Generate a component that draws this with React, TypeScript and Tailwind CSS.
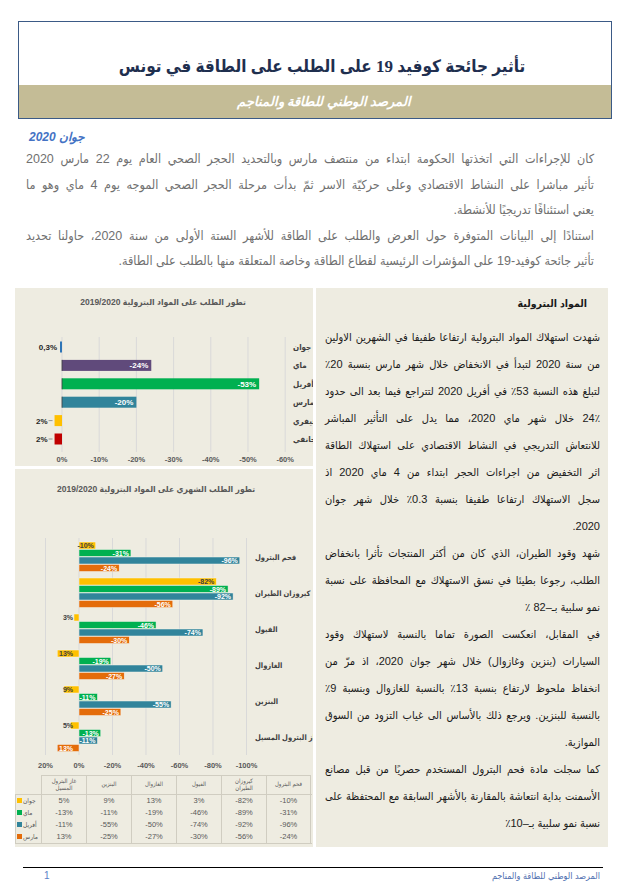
import type { ReactNode } from "react";

const intro: [string, boolean][] = [
  ["كان للإجراءات التي اتخذتها الحكومة ابتداء من منتصف مارس وبالتحديد الحجر الصحي العام يوم 22 مارس 2020", true],
  ["تأثير مباشرا على النشاط الاقتصادي وعلى حركيّة الاسر ثمّ بدأت مرحلة الحجر الصحي الموجه يوم 4 ماي وهو ما", true],
  ["يعني استئنافًا تدريجيًا للأنشطة.", false],
  ["استنادًا إلى البيانات المتوفرة حول العرض والطلب على الطاقة للأشهر الستة الأولى من سنة 2020، حاولنا تحديد", true],
  ["تأثير جائحة كوفيد-19 على المؤشرات الرئيسية لقطاع الطاقة وخاصة المتعلقة منها بالطلب على الطاقة.", false],
];

const body: [string, boolean][] = [
  ["شهدت استهلاك المواد البترولية ارتفاعا طفيفا في الشهرين الاولين", true],
  ["من سنة 2020 لتبدأ في الانخفاض خلال شهر مارس بنسبة 20٪", true],
  ["لتبلغ هذه النسبة 53٪ في أفريل 2020 لتتراجع فيما بعد الى حدود", true],
  ["24٪ خلال شهر ماي 2020، مما يدل على التأثير المباشر", true],
  ["للانتعاش التدريجي في النشاط الاقتصادي على استهلاك الطاقة", true],
  ["اثر التخفيض من اجراءات الحجر ابتداء من 4 ماي 2020 اذ", true],
  ["سجل الاستهلاك ارتفاعا طفيفا بنسبة 0.3٪ خلال شهر جوان", true],
  ["2020.", false],
  ["شهد وقود الطيران، الذي كان من أكثر المنتجات تأثرا بانخفاض", true],
  ["الطلب، رجوعا بطيئا في نسق الاستهلاك مع المحافظة على نسبة", true],
  ["نمو سلبية بـ–82 ٪", false],
  ["في المقابل، انعكست الصورة تماما بالنسبة لاستهلاك وقود", true],
  ["السيارات (بنزين وغازوال) خلال شهر جوان 2020، اذ مرّ من", true],
  ["انخفاظ ملحوظ لارتفاع بنسبة 13٪ بالنسبة للغازوال وبنسبة 9٪", true],
  ["بالنسبة للبنزين. ويرجع ذلك بالأساس الى غياب التزود من السوق", true],
  ["الموازية.", false],
  ["كما سجلت مادة فحم البترول المستخدم حصريًا من قبل مصانع", true],
  ["الأسمنت بداية انتعاشة بالمقارنة بالأشهر السابقة مع المحتفظة على", true],
  ["نسبة نمو سلبية بـ–10٪", false],
];

const months = [
  { label: "جوان", value: 0.3, color: "#2e75b6", text: "0,3%" },
  { label: "ماي", value: -24, color: "#604a7b", text: "-24%" },
  { label: "أفريل", value: -53, color: "#00b050", text: "-53%" },
  { label: "مارس", value: -20, color: "#31849b", text: "-20%" },
  { label: "فيفري", value: 2, color: "#ffc000", text: "2%" },
  { label: "جانفي", value: 2, color: "#c00000", text: "2%" },
];

const series = [
  { label: "جوان", color: "#ffc000", ink: "#404040" },
  { label: "ماي", color: "#00b050", ink: "#ffffff" },
  { label: "أفريل", color: "#31849b", ink: "#ffffff" },
  { label: "مارس", color: "#e46c0a", ink: "#ffffff" },
];

const products = [
  { name: "فحم البترول", values: [-10, -31, -96, -24] },
  { name: "كيروزان الطيران", values: [-82, -89, -92, -56] },
  { name: "الفيول", values: [3, -46, -74, -30] },
  { name: "الغازوال", values: [13, -19, -50, -27] },
  { name: "البنزين", values: [9, -11, -55, -25] },
  { name: "غاز البترول المسيل", values: [5, -13, -11, 13] },
];

function Lines({ lines }: { lines: [string, boolean][] }) {
  return (
    <>
      {lines.map(([text, full], i) => (
        <div
          key={i}
          className={`whitespace-nowrap ${full ? "text-justify [text-align-last:justify]" : "text-right"}`}
        >
          {text}
        </div>
      ))}
    </>
  );
}

function DemandChart() {
  const x = (v: number) => 47 - v * 3.72;
  return (
    <svg width="298" height="178" className="block">
      <text x="148" y="17" textAnchor="middle" direction="rtl" fontSize="8.5" fontWeight="700" fill="#595959">
        تطور الطلب على المواد البترولية 2019/2020
      </text>
      {[0, 1, 2, 3, 4, 5, 6].map((k) => (
        <g key={k}>
          <line x1={47 + k * 37.2} x2={47 + k * 37.2} y1="49" y2="164" stroke="#d9d9d9" strokeWidth="1" />
          <text x={47 + k * 37.2} y="174" textAnchor="middle" fontSize="7.5" fontWeight="700" fill="#595959">
            {k === 0 ? "0%" : `-${k * 10}%`}
          </text>
        </g>
      ))}
      {months.map((m, i) => {
        const cy = 59 + i * 18.4;
        const end = x(m.value);
        const left = Math.min(end, 47);
        const width = Math.max(Math.abs(end - 47), 2);
        return (
          <g key={m.label}>
            <rect x={m.value > 0 && width < 3 ? 45 : left} y={cy - 5.5} width={width} height="11" fill={m.color} />
            {m.value < 0 ? (
              <>
                <line x1="47" x2="47" y1={cy - 5.5} y2={cy + 5.5} stroke="#404040" strokeWidth="0.8" />
                <text x={end - 3} y={cy + 3} textAnchor="end" fontSize="8" fontWeight="700" fill="#ffffff">
                  {m.text}
                </text>
              </>
            ) : m.value >= 1 ? (
              <>
                <line x1={left - 6} x2={left - 2} y1={cy} y2={cy} stroke="#7f7f7f" strokeWidth="0.8" />
                <text x={left - 7} y={cy + 3} textAnchor="end" fontSize="8" fontWeight="700" fill="#262626">
                  {m.text}
                </text>
              </>
            ) : (
              <text x="42" y={cy + 3} textAnchor="end" fontSize="8" fontWeight="700" fill="#262626">
                {m.text}
              </text>
            )}
            <text x="278" y={cy + 3} fontSize="8" fontWeight="700" fill="#404040">
              {m.label}
            </text>
          </g>
        );
      })}
    </svg>
  );
}

function MonthlyChart() {
  const x = (v: number) => 64 - v * 1.675;
  return (
    <svg width="298" height="306" className="block">
      <text x="141" y="23" textAnchor="middle" direction="rtl" fontSize="8.5" fontWeight="700" fill="#595959">
        تطور الطلب الشهري على المواد البترولية 2019/2020
      </text>
      {[20, 0, -20, -40, -60, -80, -100].map((t) => (
        <g key={t}>
          <line x1={x(t)} x2={x(t)} y1="69" y2="286" stroke="#d9d9d9" strokeWidth="1" />
          <text x={x(t)} y="299" textAnchor="middle" fontSize="7.5" fontWeight="700" fill="#595959">
            {`${t}%`}
          </text>
        </g>
      ))}
      {products.map((p, i) => {
        const top = 73 + i * 36;
        return (
          <g key={p.name}>
            {p.values.map((v, j) => {
              const end = x(v);
              const y = top + j * 7.5;
              const s = series[j];
              return (
                <g key={j}>
                  <rect
                    x={Math.min(end, 64)}
                    y={y}
                    width={Math.abs(end - 64)}
                    height="7"
                    fill={s.color}
                    stroke="#f4f2ea"
                    strokeWidth="0.5"
                  />
                  <text
                    x={v < 0 ? end - 2 : 58}
                    y={y + 6}
                    textAnchor="end"
                    fontSize="7"
                    fontWeight="700"
                    fill={v > 0 && j === 0 ? "#404040" : s.ink}
                  >
                    {`${v}%`}
                  </text>
                </g>
              );
            })}
            <text x="240" y={top + 18} fontSize="7.5" fontWeight="700" fill="#404040">
              {p.name}
            </text>
          </g>
        );
      })}
    </svg>
  );
}

function Cell({ children, last = false }: { children: ReactNode; last?: boolean }) {
  return (
    <div
      className={`flex w-[45px] items-center justify-center border-l border-[#d0cdc1] text-center ${last ? "border-r" : ""}`}
    >
      {children}
    </div>
  );
}

function DataTable() {
  const cols = [...products].reverse();
  return (
    <div className="text-[#595959]">
      <div className="flex h-[19px] text-[6px] leading-[7px]">
        <div className="w-[26px]" />
        {cols.map((p, i) => (
          <div
            key={p.name}
            dir="rtl"
            className={`flex w-[45px] items-center justify-center border-t border-l border-[#d0cdc1] px-[5px] text-center ${
              i === cols.length - 1 ? "border-r" : ""
            }`}
          >
            {p.name}
          </div>
        ))}
      </div>
      <div className="w-[297px] border-y border-l border-[#d0cdc1] text-[7.5px] leading-[12px]">
        {series.map((s, j) => (
          <div key={s.label} className="flex h-[12px]">
            <div className="flex w-[25px] items-center gap-[1px] pl-[1px] text-[6.5px]">
              <span className="inline-block size-[5px] shrink-0" style={{ backgroundColor: s.color }} />
              <span>{s.label}</span>
            </div>
            {cols.map((p, i) => (
              <Cell key={p.name} last={i === cols.length - 1}>
                {`${p.values[j]}%`}
              </Cell>
            ))}
          </div>
        ))}
      </div>
    </div>
  );
}

export default function App() {
  return (
    <div className="relative h-[893px] w-[624px] overflow-hidden bg-white pt-[21px] font-['Liberation_Sans','DejaVu_Sans_Condensed','DejaVu_Sans',sans-serif]">
      <header className="ml-[18px] w-[594px] border border-[#3b5a86]">
        <div className="flex h-[63px] items-end justify-center pb-[5px] pl-[14px]">
          <h1
            dir="rtl"
            className="font-['Liberation_Serif','DejaVu_Sans_Condensed','DejaVu_Sans',serif] text-[17px] leading-[26px] font-bold text-[#1f2f4f]"
          >
            تأثير جائحة كوفيد 19 على الطلب على الطاقة في تونس
          </h1>
        </div>
        <div className="flex h-[33px] items-center justify-center bg-[#c4bc96] pl-[18px]">
          <p dir="rtl" className="text-[13px] leading-[18px] font-bold text-white italic">
            المرصد الوطني للطاقة والمناجم
          </p>
        </div>
      </header>

      <p dir="rtl" className="mt-[10px] ml-[29px] w-fit text-[12px] leading-[16px] font-bold text-[#4472c4] italic">
        جوان 2020
      </p>

      <div dir="rtl" className="mt-[2px] ml-[26px] w-[568px] text-[12.5px] leading-[25.5px] text-[#707070]">
        <Lines lines={intro} />
      </div>

      <div className="mt-[13px] ml-[15px] flex h-[559px] gap-[3px]">
        <div className="flex w-[298px] flex-col gap-[3px]">
          <section className="h-[178px] overflow-hidden bg-[#eeece1]">
            <DemandChart />
          </section>
          <section className="h-[378px] overflow-hidden bg-[#eeece1]">
            <MonthlyChart />
            <DataTable />
          </section>
        </div>

        <section dir="rtl" className="w-[292px] bg-[#eeece1] pt-[5px] pr-[8px] pl-[9px] text-[#1a1a1a]">
          <h2 className="mr-[13px] text-[10.5px] leading-[20px] font-bold">المواد البترولية</h2>
          <div className="mt-[11px] text-[11px] leading-[27px]">
            <Lines lines={body} />
          </div>
        </section>
      </div>

      <footer className="mt-[20px] ml-[23px] w-[580px] border-t border-black">
        <div className="flex items-center justify-between pt-[2px] pr-[3px] pl-[21px] text-[9px] leading-[12px]">
          <span className="text-[10px] text-[#5b7fc7]">1</span>
          <span dir="rtl" className="text-[#4f6fb0]">
            المرصد الوطني للطاقة والمناجم
          </span>
        </div>
      </footer>
    </div>
  );
}
